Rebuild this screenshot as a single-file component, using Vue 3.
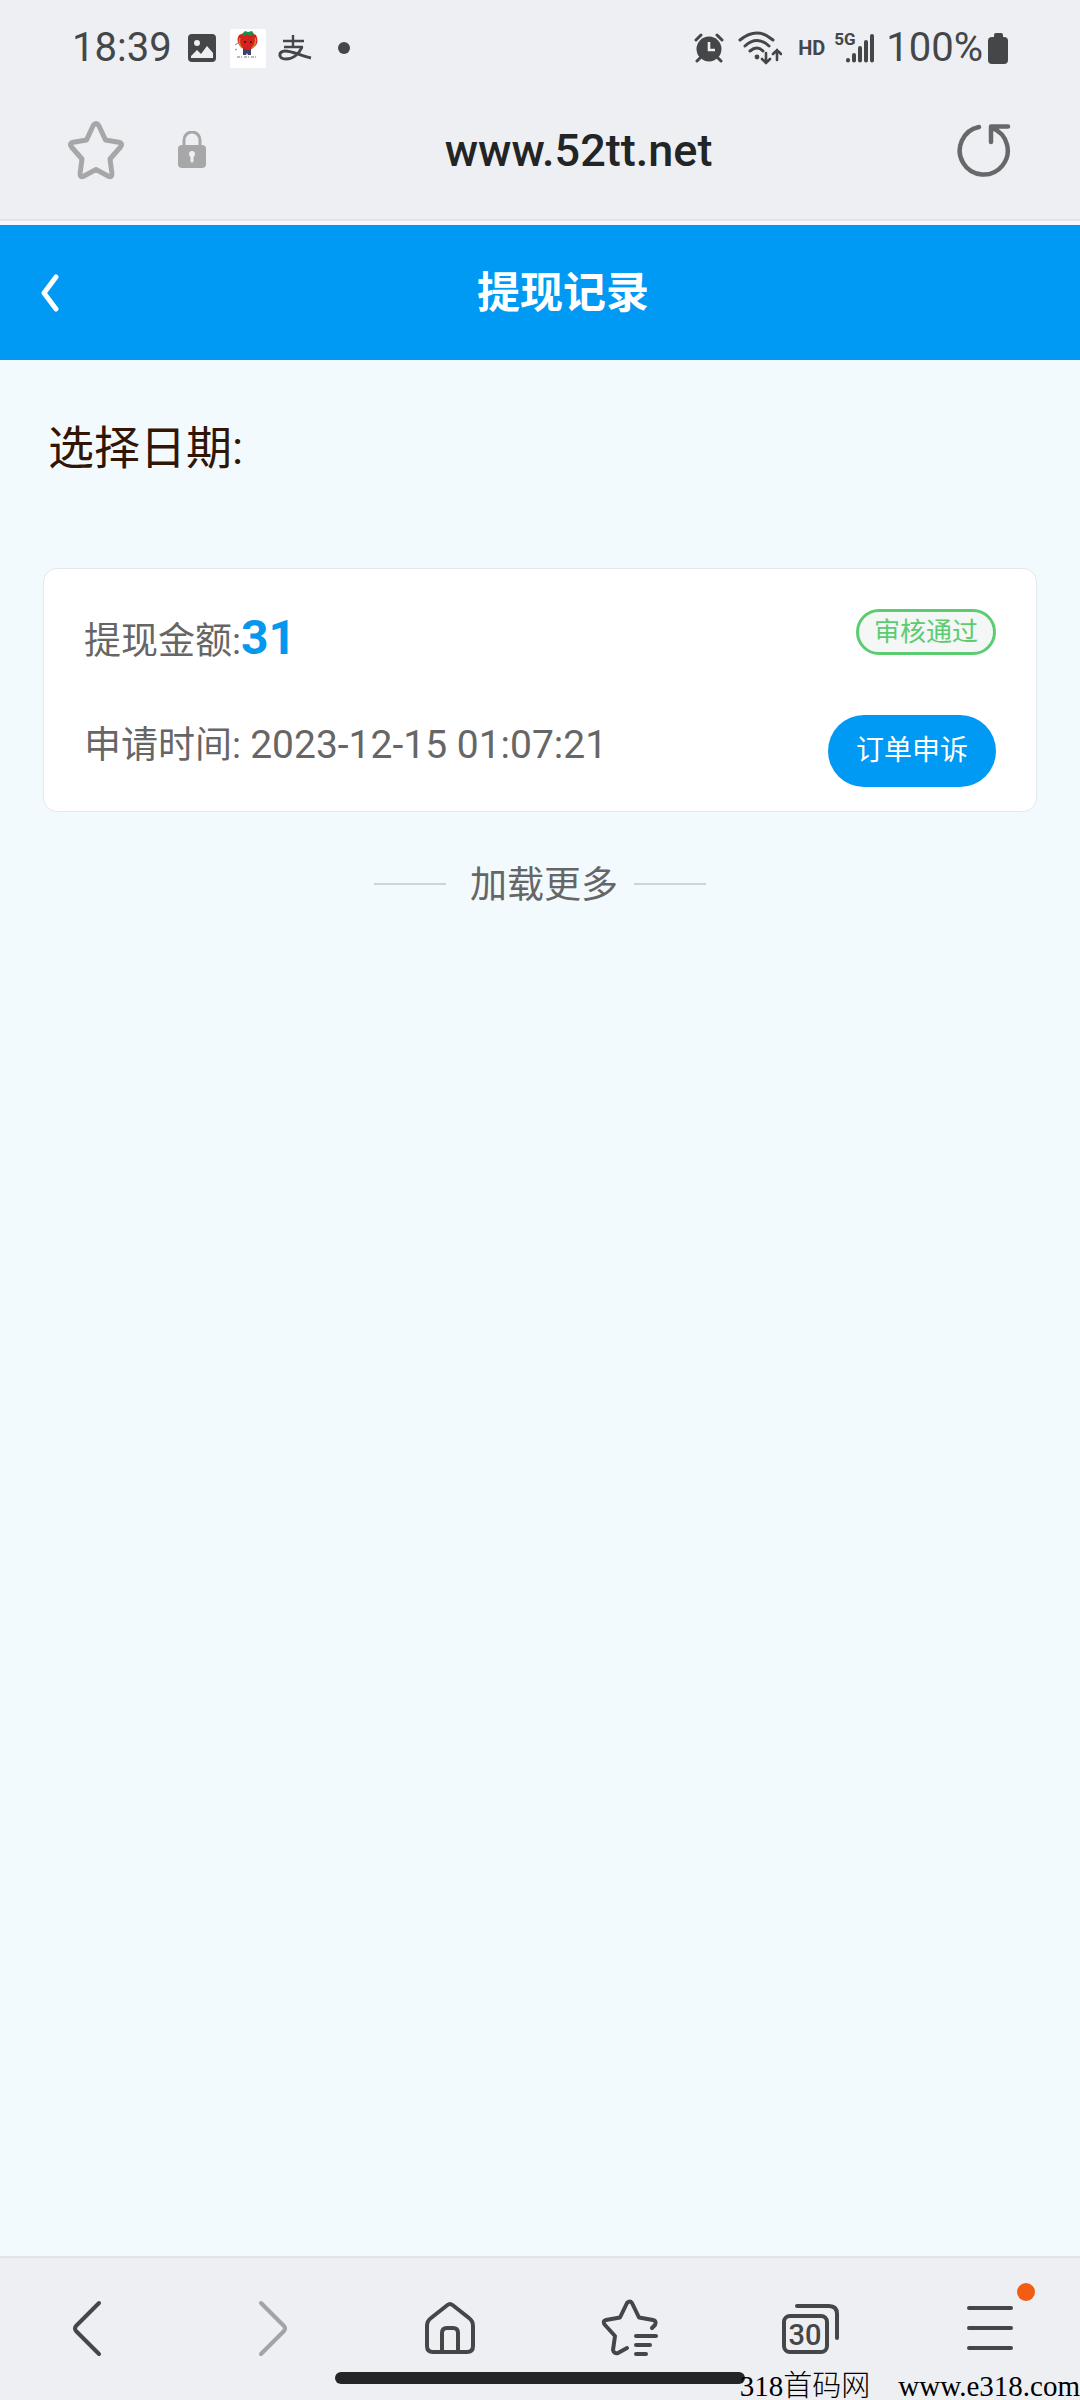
<script setup>
import { ref } from 'vue'

const address = ref('www.52tt.net')
const records = [{ amount: '31', time: '2023-12-15 01:07:21', status: '审核通过' }]
</script>

<template>
  <div class="screen">
    <header class="browser-top">
      <div class="status">
        <div class="status-left">
          <span class="clock">18:39</span>
          <svg class="ic-image" width="28" height="28" viewBox="0 0 28 28">
            <rect width="28" height="28" rx="4" fill="#444648" />
            <circle cx="9" cy="9" r="3" fill="#eeeff3" />
            <path d="M3 22 L9 16 L13 20 L19 12 L25 19 V24 H3 Z" fill="#eeeff3" />
          </svg>
          <svg class="ic-app" width="36" height="39" viewBox="0 0 36 39">
            <rect width="36" height="39" rx="2" fill="#fff" />
            <path d="M13 19 H21 V26 H18 L17 24 L16 26 H13 Z" fill="#3d4468" />
            <path d="M9 6 Q18 1 26 6 Q30 14 23 19 Q18 23 12 19 Q5 13 9 6 Z" fill="#d5221e" />
            <path d="M10 9 Q8 15 12 19 M25 9 Q27 15 22 19" fill="none" stroke="#c78b2d" stroke-width="1.5" />
            <path d="M12 5 L15 2 L18 3 L22 2 L24 5 L20 7 L17 5 L14 7 Z" fill="#15924c" />
            <path d="M14 13 H16 M20 13 H22" stroke="#5a1414" stroke-width="2" />
            <path d="M5 16 L8 14 M5 21 L7 20" stroke="#888" />
            <path d="M7 28 H27" stroke="#777" stroke-width="1" stroke-dasharray="3 1 1 2" />
          </svg>
          <svg class="ic-pay" width="34" height="27" viewBox="0 0 34 27" fill="none" stroke="#444648" stroke-width="3">
            <path d="M5 6 H26 M15 0 V11 M6 12 H25" stroke-width="2.4" />
            <path d="M24 12 C21 19 15 24 8 24 C0 24 0 16 7 16 C15 16 23 21 33 23" />
          </svg>
          <span class="dot"></span>
        </div>
        <div class="status-right">
          <svg class="ic-alarm" width="30" height="30" viewBox="0 0 30 30">
            <circle cx="15" cy="16" r="12.5" fill="#444648" />
            <path d="M2 7 L7 2 M28 7 L23 2 M6 25 L3 28 M24 25 L27 28" stroke="#444648" stroke-width="3" stroke-linecap="round" />
            <path d="M15 9 V17 H21" fill="none" stroke="#eeeff3" stroke-width="2.6" />
          </svg>
          <svg class="ic-wifi" width="44" height="34" viewBox="0 0 44 34" fill="none" stroke="#444648" stroke-width="3" stroke-linecap="round">
            <path d="M2 9 Q19 -5 35 9 M7 15 Q19 4 31 15 M12 20 Q19 14 25 20" />
            <circle cx="19" cy="26" r="2.4" fill="#444648" stroke="none" />
            <path d="M28 22 V32 M24 28 L28 32 L32 28 M39 29 V19 M35 23 L39 19 L43 23" stroke-width="2.6" />
          </svg>
          <span class="hd">HD</span>
          <span class="network">
            <span class="gen">5G</span>
            <svg width="30" height="29" viewBox="0 0 30 29" stroke="#444648" stroke-linecap="round">
              <path d="M3 26 V26.5 M9 21 V26.5 M15 14 V26.5 M21 8 V26.5 M27 2 V26.5" stroke-width="4" />
            </svg>
          </span>
          <span class="percent">100%</span>
          <svg class="ic-battery" width="20" height="31" viewBox="0 0 20 31" fill="#444648">
            <rect x="6" width="9" height="8" rx="2" />
            <rect y="4" width="20" height="27" rx="4" />
          </svg>
        </div>
      </div>

      <div class="address-bar">
        <button class="plain" aria-label="收藏">
          <svg width="60" height="60" viewBox="0 0 60 60" fill="none" stroke="#a7a7a8" stroke-width="5" stroke-linejoin="round">
            <path d="M27 6 Q30 1 33 6 L39.500 20 L54 22.500 Q57 24 54.500 27 L44 39 L46 54 Q46 58 42 56 L30 49.500 L18 56 Q14 58 14 54 L16 39 L5.500 27 Q3 24 6 22.500 L20.500 20 Z" />
          </svg>
        </button>
        <svg class="lock" width="28" height="38" viewBox="0 0 28 38">
          <path d="M6 17 V9 A8 8 0 0 1 22 9 V17" fill="none" stroke="#a7a7a8" stroke-width="3" />
          <rect y="14" width="28" height="23" rx="4" fill="#a7a7a8" />
          <path d="M14 23 V30" stroke="#eeeff3" stroke-width="3" stroke-linecap="round" />
          <circle cx="14" cy="23" r="3" fill="#eeeff3" />
        </svg>
        <input v-model="address" class="url" type="text" aria-label="网址" />
        <button class="plain" aria-label="刷新">
          <svg width="56" height="56" viewBox="0 0 56 56" fill="none" stroke="#676869" stroke-width="4.500" stroke-linecap="round" stroke-linejoin="round">
            <path d="M23 5 A24 24 0 1 0 36 6 M52 4.500 H35 V20" />
          </svg>
        </button>
      </div>
    </header>

    <div class="title-bar">
      <button class="plain back" aria-label="返回">
        <svg width="20" height="38" viewBox="0 0 20 38" fill="none" stroke="#fff" stroke-width="5" stroke-linecap="round" stroke-linejoin="round">
          <path d="M16 3 L4 19 L16 35" />
        </svg>
      </button>
      <h1>提现记录</h1>
    </div>

    <main>
      <p class="date-label">选择日期:</p>

      <article v-for="item in records" :key="item.time" class="card">
        <div class="row">
          <p class="amount">提现金额:<strong>{{ item.amount }}</strong></p>
          <span class="badge">{{ item.status }}</span>
        </div>
        <div class="row">
          <p class="time">申请时间: <time>{{ item.time }}</time></p>
          <button class="appeal">订单申诉</button>
        </div>
      </article>

      <div class="more"><span>加载更多</span></div>
    </main>

    <nav class="toolbar">
      <button class="plain" aria-label="后退">
        <svg width="60" height="60" viewBox="0 0 60 60">
          <path d="M39 5 L16 28 Q14 30.500 16 33 L39 56" />
        </svg>
      </button>
      <button class="plain" aria-label="前进">
        <svg class="faded" width="60" height="60" viewBox="0 0 60 60">
          <path d="M21 5 L44 28 Q46 30.500 44 33 L21 56" />
        </svg>
      </button>
      <button class="plain" aria-label="主页">
        <svg width="60" height="60" viewBox="0 0 60 60">
          <path d="M27.500 7 Q30 5 32.500 7 L49 20 Q53 23 53 28 V48 Q53 54 47 54 H13 Q7 54 7 48 V28 Q7 23 11 20 Z M22 54 V35 Q22 30 27 30 H33 Q38 30 38 35 V54" />
        </svg>
      </button>
      <button class="plain" aria-label="书签">
        <svg width="60" height="60" viewBox="0 0 60 60">
          <path d="M52 30 L55 27 Q57 23 53 22 L39 19.500 L32 5 Q30 2 27 5 L20 19.500 L6 22 Q2 23 5 27 L15 38 L13 52 Q14 56 18 55 L27 50 M36 38 H56 M36 47 H50 M36 56 H46" />
        </svg>
      </button>
      <button class="plain tabs" aria-label="标签页">
        <svg width="60" height="60" viewBox="0 0 60 60">
          <rect x="4" y="18" width="43" height="36" rx="6" />
          <path d="M17 8 H49 Q57 8 57 16 V40" />
        </svg>
        <span class="tab-count">30</span>
      </button>
      <button class="plain menu" aria-label="菜单">
        <svg width="60" height="60" viewBox="0 0 60 60">
          <path d="M9 10 H51 M9 30 H51 M9 50 H51" />
        </svg>
        <span class="notice"></span>
      </button>
      <span class="handle"></span>
      <p class="credit"><span>318首码网</span><span>www.e318.com</span></p>
    </nav>
  </div>
</template>

<style>
body {
  margin: 0;
}
</style>

<style scoped>
.screen {
  display: flex;
  flex-direction: column;
  min-height: 100vh;
  background: #f2fafd;
  color: #666;
  font-family: Roboto, "Noto Sans CJK SC", sans-serif;
}

p,
h1 {
  margin: 0;
}

svg {
  display: block;
  flex: none;
}

button {
  font-family: inherit;
  cursor: pointer;
}

.plain {
  display: flex;
  align-items: center;
  justify-content: center;
  padding: 0;
  border: 0;
  background: none;
}

.browser-top {
  background: #eeeff3;
  border-bottom: 2px solid #e3e4e8;
  margin-bottom: 4px;
}

.status {
  display: flex;
  justify-content: space-between;
  align-items: center;
  height: 96px;
  padding: 0 72px;
  color: #444648;
  font-size: 40px;
  line-height: 48px;
}

.status-left,
.status-right {
  display: flex;
  align-items: center;
}

.ic-image {
  margin-left: 16px;
}

.ic-app {
  margin-left: 14px;
}

.ic-pay {
  margin-left: 12px;
}

.dot {
  width: 12px;
  height: 12px;
  margin-left: 26px;
  border-radius: 50%;
  background: #444648;
}

.ic-wifi {
  margin-left: 14px;
}

.hd {
  margin-left: 16px;
  font-size: 20px;
  font-weight: 700;
}

.network {
  position: relative;
  margin-left: 20px;
}

.gen {
  position: absolute;
  top: -5px;
  left: -11px;
  font-size: 17px;
  font-weight: 700;
  line-height: 20px;
}

.percent {
  margin-left: 11px;
}

.ic-battery {
  margin-left: 5px;
}

.address-bar {
  display: flex;
  align-items: center;
  height: 107px;
  padding: 0 68px 16px 66px;
}

.lock {
  margin-left: 52px;
}

.url {
  flex: 1;
  min-width: 0;
  padding: 3px 5px 0 0;
  border: 0;
  outline: 0;
  background: none;
  color: #222426;
  font-family: inherit;
  font-size: 45px;
  font-weight: 500;
  line-height: 56px;
  text-align: center;
}

.title-bar {
  display: flex;
  align-items: center;
  height: 135px;
  padding: 0 14px 0 40px;
  background: #0099f3;
  color: #fff;
}

h1 {
  flex: 1;
  font-size: 43px;
  line-height: 64px;
  text-align: center;
}

main {
  flex: 1;
  padding: 0 42px;
}

.date-label {
  padding: 54px 6px 86px;
  color: #331505;
  font-size: 46px;
  line-height: 68px;
}

.card {
  display: flex;
  flex-direction: column;
  padding: 40px 40px 24px;
  border: 1px solid #e2e8ec;
  border-radius: 14px;
  background: #fff;
  margin: 0 1px;
}

.row {
  display: flex;
  justify-content: space-between;
  align-items: flex-start;
}

.row + .row {
  margin-top: 44px;
}

.amount {
  font-size: 37px;
  line-height: 58px;
}

.time {
  font-size: 37px;
  line-height: 60px;
}

.amount strong {
  color: #0398ee;
  font-size: 48px;
}

.time time {
  font-size: 39px;
}

.badge {
  padding: 0 15px;
  border: 3px solid #5ccc70;
  border-radius: 24px;
  background: #f5f6f6;
  color: #5ccc70;
  font-size: 26px;
  line-height: 40px;
}

.appeal {
  padding: 0 28px;
  border: 0;
  border-radius: 36px;
  background: #0099f3;
  color: #fff;
  font-size: 28px;
  line-height: 72px;
}

.more {
  display: flex;
  justify-content: center;
  align-items: center;
  gap: 16px;
  margin-top: 38px;
  font-size: 37px;
  line-height: 64px;
}

.more span {
  padding: 4px 0 0 8px;
}

.more::before,
.more::after {
  content: "";
  width: 72px;
  height: 2px;
  background: #ccd4d7;
}

.toolbar {
  position: relative;
  display: grid;
  grid-template-columns: repeat(6, 1fr);
  box-sizing: border-box;
  height: 144px;
  padding-bottom: 2px;
  border-top: 2px solid #e3e4e8;
  background: #eeeff3;
}

.toolbar svg {
  fill: none;
  stroke: #444648;
  stroke-width: 4;
  stroke-linecap: round;
  stroke-linejoin: round;
}

.toolbar svg.faded {
  stroke: #a2a3a6;
}

.tabs,
.menu {
  position: relative;
}

.tab-count {
  position: absolute;
  left: calc(50% - 30px);
  top: 61px;
  width: 50px;
  color: #444648;
  font-size: 29px;
  font-weight: 500;
  line-height: 32px;
  text-align: center;
}

.notice {
  position: absolute;
  left: calc(50% + 27px);
  top: 25px;
  width: 18px;
  height: 18px;
  border-radius: 50%;
  background: #f25d13;
}

.handle {
  position: absolute;
  left: 31%;
  bottom: 16px;
  width: 38%;
  height: 12px;
  border-radius: 6px;
  background: #242526;
}

.credit {
  position: absolute;
  right: 0;
  bottom: 0;
  display: flex;
  gap: 28px;
  color: #000;
  font-family: "Liberation Serif", "Noto Sans CJK SC", serif;
  font-size: 29px;
  font-weight: 300;
  line-height: 28px;
}
</style>
